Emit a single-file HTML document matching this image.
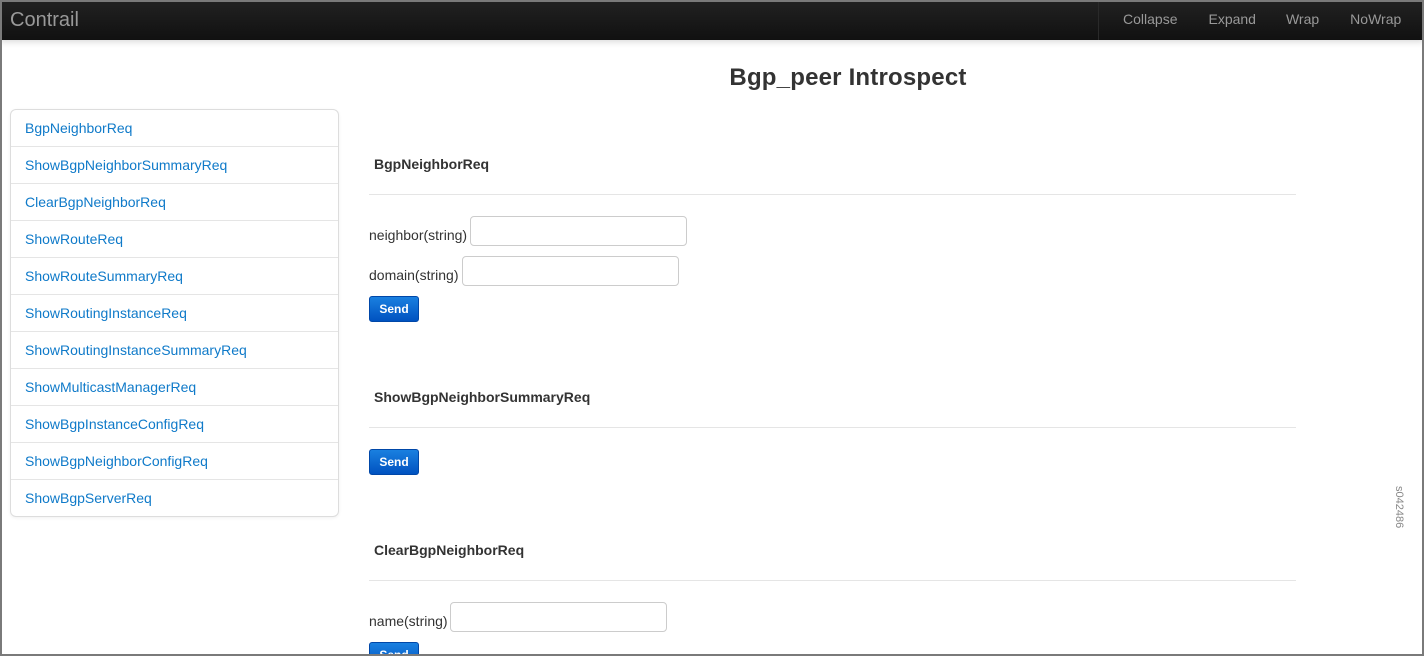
<!DOCTYPE html>
<html style="overflow:hidden;width:1424px;height:656px"><head><style>
*{box-sizing:border-box;margin:0;padding:0}
body{width:1424px;height:656px;overflow:hidden;background:#fff;font-family:"Liberation Sans",Arial,sans-serif;position:relative;font-size:14px;color:#333}
.frame{position:absolute;left:0;top:0;width:1424px;height:656px;border:2px solid #7a7a7a;pointer-events:none;z-index:10}
.nav{position:absolute;left:0;top:0;width:1424px;height:40px;background:linear-gradient(#222,#111);box-shadow:0 2px 6px rgba(0,0,0,.15)}
.brand{position:absolute;left:10px;top:9px;font-size:20px;color:#999}
.navr{position:absolute;left:1098px;top:0;height:40px;border-left:1px solid #2a2a2a;display:flex}
.navr span{color:#999;font-size:14px;line-height:39px}
.side{position:absolute;left:10px;top:109px;width:329px;height:408px;border:1px solid #ddd;border-radius:6px;box-shadow:0 1px 3px rgba(0,0,0,.06)}
.side div{height:37px;line-height:37px;padding-left:14px;color:#0f7ac9;border-top:1px solid #e5e5e5;font-size:14px}
.side div:first-child{border-top:none;height:36px}
.a{position:absolute}
h1{position:absolute;left:598px;width:500px;text-align:center;top:64px;font-size:24px;font-weight:bold;color:#333;letter-spacing:0.2px}
.h{font-weight:bold;font-size:14px;left:374px}
.hr{left:369px;width:927px;height:1px;background:#e5e5e5}
.in{border:1px solid #ccc;border-radius:4px;height:30px;width:217px;background:#fff}
.btn{width:50px;height:26px;border-radius:3px;background:linear-gradient(#1a80e0,#0052c0);border:1px solid #0047a8;color:#fff;font-size:12px;font-weight:bold;text-align:center;line-height:24px}
.lbl{font-size:14px;color:#333;left:369px}
.clip{position:absolute;left:0;top:0;width:1424px;height:656px;overflow:hidden}
</style></head><body><div class="clip">
<div class="nav"><div class="brand">Contrail</div>
<div class="navr"><span style="margin-left:24px">Collapse</span><span style="margin-left:31px">Expand</span><span style="margin-left:30px">Wrap</span><span style="margin-left:31px">NoWrap</span></div></div>
<h1>Bgp_peer Introspect</h1>
<div class="side">
<div>BgpNeighborReq</div><div>ShowBgpNeighborSummaryReq</div><div>ClearBgpNeighborReq</div><div>ShowRouteReq</div><div>ShowRouteSummaryReq</div><div>ShowRoutingInstanceReq</div><div>ShowRoutingInstanceSummaryReq</div><div>ShowMulticastManagerReq</div><div>ShowBgpInstanceConfigReq</div><div>ShowBgpNeighborConfigReq</div><div>ShowBgpServerReq</div>
</div>
<div class="a h" style="top:156px">BgpNeighborReq</div>
<div class="a hr" style="top:194px"></div>
<div class="a lbl" style="top:227px">neighbor(string)</div>
<div class="a in" style="left:470px;top:216px"></div>
<div class="a lbl" style="top:267px">domain(string)</div>
<div class="a in" style="left:462px;top:256px"></div>
<div class="a btn" style="left:369px;top:296px">Send</div>
<div class="a h" style="top:389px">ShowBgpNeighborSummaryReq</div>
<div class="a hr" style="top:427px"></div>
<div class="a btn" style="left:369px;top:449px">Send</div>
<div class="a h" style="top:542px">ClearBgpNeighborReq</div>
<div class="a hr" style="top:580px"></div>
<div class="a lbl" style="top:613px">name(string)</div>
<div class="a in" style="left:450px;top:602px"></div>
<div class="a btn" style="left:369px;top:642px">Send</div>
<div class="a" style="left:1393px;top:486px;writing-mode:vertical-rl;font-size:11px;color:#888">s042486</div>
<div class="frame"></div>
</div></body></html>
